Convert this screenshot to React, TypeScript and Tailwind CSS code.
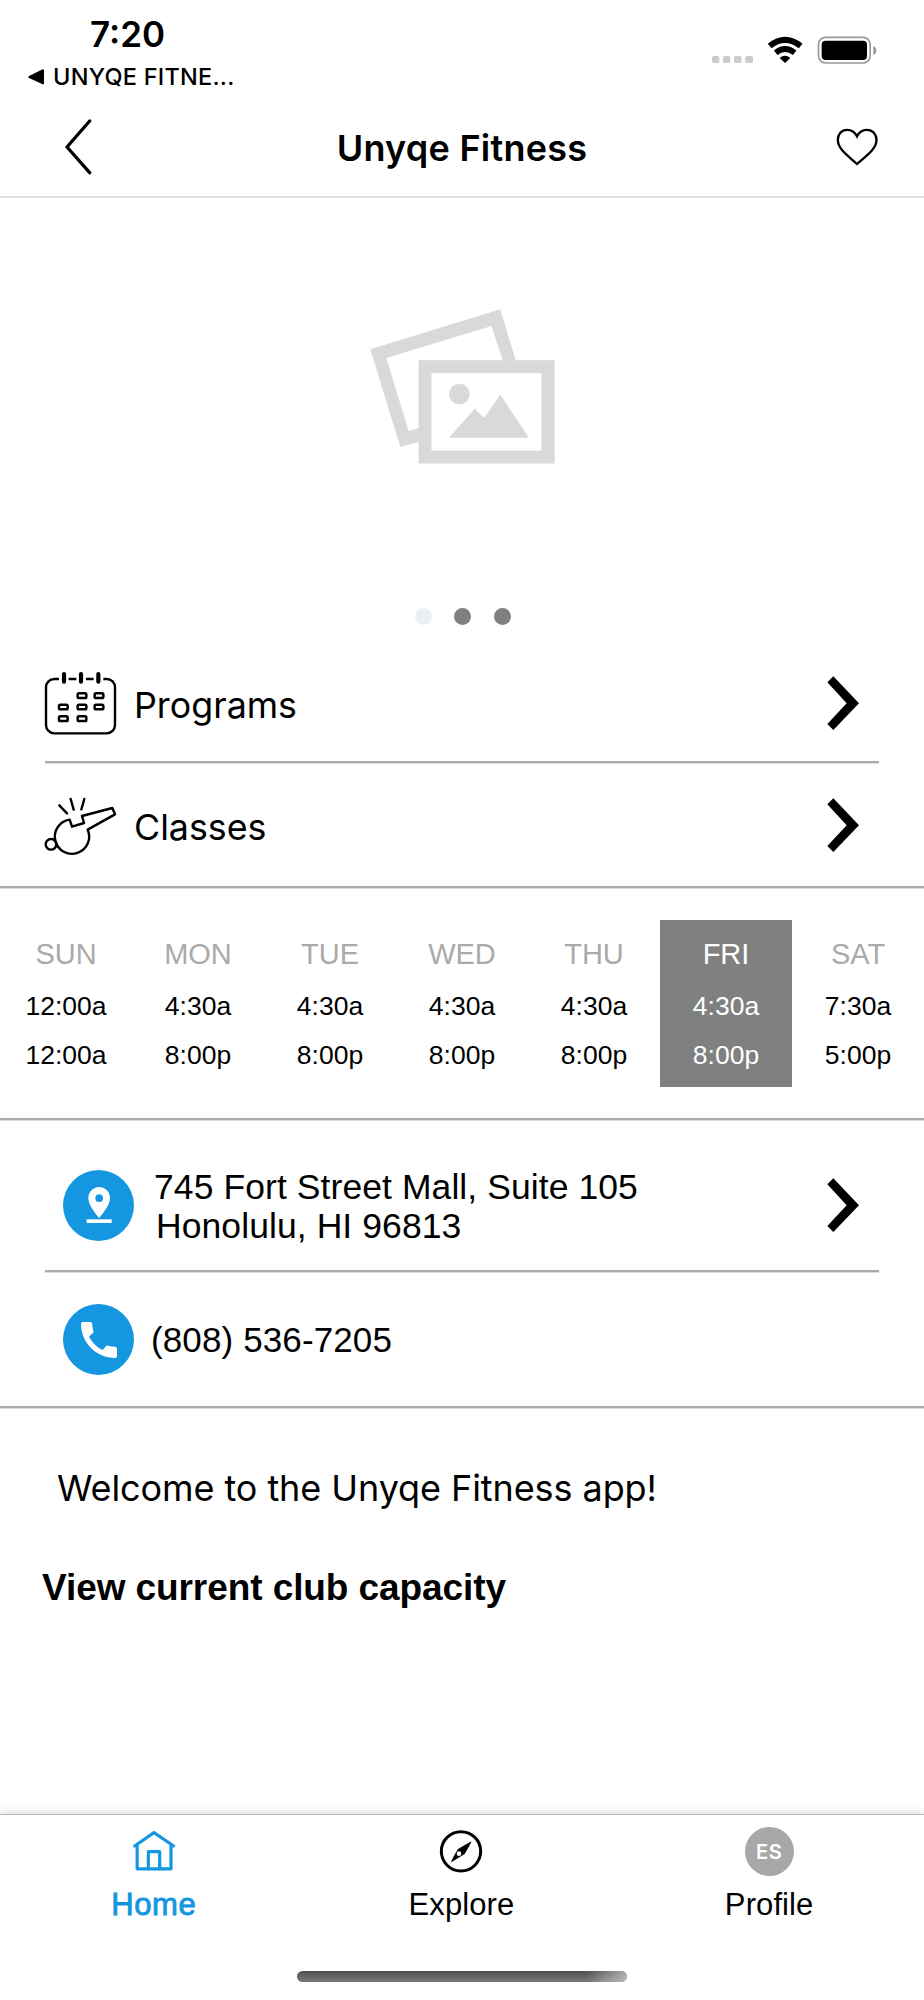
import type { ReactNode } from "react";

const hours = [
  { day: "SUN", open: "12:00a", close: "12:00a" },
  { day: "MON", open: "4:30a", close: "8:00p" },
  { day: "TUE", open: "4:30a", close: "8:00p" },
  { day: "WED", open: "4:30a", close: "8:00p" },
  { day: "THU", open: "4:30a", close: "8:00p" },
  { day: "FRI", open: "4:30a", close: "8:00p" },
  { day: "SAT", open: "7:30a", close: "5:00p" },
];

const today = "FRI";

function ChevronRight() {
  return (
    <svg className="h-[54px] w-[32px]" viewBox="143 78 96 162">
      <path d="M162 79 239 159.500 162 240 144 222 202 159.500 144 97Z" />
    </svg>
  );
}

function CalendarIcon() {
  return (
    <svg className="h-[65px] w-[73px]" viewBox="132 62 219 195" fill="none" stroke="#000">
      <path
        d="M177 86H163a25 25 0 0 0-25 25V224a25 25 0 0 0 25 25H320a25 25 0 0 0 25-25V111a25 25 0 0 0-25-25H310M206 86H229M258 86H281"
        strokeWidth="7.200"
      />
      <path d="M192 71V94M243 71V94M295 71V94" strokeWidth="12.500" strokeLinecap="round" />
      <g strokeWidth="7.500">
        <rect x="233" y="129" width="26" height="14" rx="4" />
        <rect x="284" y="129" width="26" height="14" rx="4" />
        <rect x="177" y="163" width="26" height="14" rx="4" />
        <rect x="233" y="163" width="26" height="14" rx="4" />
        <rect x="284" y="163" width="26" height="14" rx="4" />
        <rect x="177" y="198" width="26" height="14" rx="4" />
        <rect x="233" y="198" width="26" height="14" rx="4" />
      </g>
    </svg>
  );
}

function WhistleIcon() {
  return (
    <svg
      className="mt-[4px] h-[60px] w-[73px]"
      viewBox="132 440 219 180"
      fill="none"
      stroke="#000"
      strokeWidth="7.200"
      strokeLinecap="round"
      strokeLinejoin="round"
    >
      <path d="M209 508 216 529 252 518 246 497 337 473 345 492 263 538A51.500 51.500 0 1 1 209 508Z" />
      <circle cx="153" cy="582" r="16" />
      <path d="M178 465 201 489M212 446 221 478M253 446 244 477" />
    </svg>
  );
}

function StatusBar() {
  return (
    <div className="flex h-[98px] justify-between font-['Inter',sans-serif]">
      <div className="pt-[14px]">
        <div className="pl-[90px] text-[35px] leading-[40px] font-semibold">7:20</div>
        <div className="mt-[7px] flex items-center pl-[28px] leading-[32px]">
          <svg className="mr-[9px] h-[16px] w-[16px]" viewBox="84 206 48 46">
            <path d="M128 206Q132 206 132 210V248Q132 252 128 251L87 232Q82 229 87 226Z" />
          </svg>
          <span className="text-[23.5px] font-medium tracking-[0.25px]">UNYQE FITNE...</span>
        </div>
      </div>
      <svg className="mt-[34px] mr-[46px] h-[32px] w-[168px]" viewBox="744 102 504 96">
        <g fill="#ccc">
          <rect x="750" y="168" width="22" height="21" rx="5" />
          <rect x="783" y="168" width="22" height="21" rx="5" />
          <rect x="816" y="168" width="23" height="21" rx="5" />
          <rect x="850" y="168" width="23" height="21" rx="5" />
        </g>
        <g fill="none" stroke="#000">
          <path d="M923 138Q969 101 1016 138" strokeWidth="18" />
          <path d="M941 158Q969 136 998 158" strokeWidth="17" />
        </g>
        <path d="M953 174Q969 160 985 174L969 189Z" />
        <rect x="1069.500" y="112" width="155" height="77" rx="21" fill="none" stroke="#999" strokeWidth="5" />
        <rect x="1079" y="122" width="136" height="58" rx="12" />
        <path d="M1234 138Q1243 142 1243 151.500 1243 161 1234 165Z" fill="#999" />
      </svg>
    </div>
  );
}

function Header() {
  return (
    <header className="flex h-[100px] items-center justify-between border-b-2 border-[#dedede] pr-[46px] pl-[64px]">
      <svg
        className="h-[56px] w-[42px]"
        viewBox="192 357 126 168"
        fill="none"
        stroke="#000"
        strokeWidth="10"
        strokeLinecap="round"
        strokeLinejoin="round"
      >
        <path d="M269 363 201 441 269 518" />
      </svg>
      <h1 className="mr-[18px] pt-[2px] font-['Inter',sans-serif] text-[36px] leading-[44px] font-semibold tracking-[0.25px]">
        Unyqe Fitness
      </h1>
      <svg className="mb-px h-[38px] w-[42px]" viewBox="1123 383 126 114" fill="none" stroke="#000" strokeWidth="7">
        <path d="M1186 408C1179 394 1167 388.500 1156 388.500 1139 388.500 1128.500 402 1128.500 419 1128.500 447 1161 468 1186 491 1211 468 1244.500 447 1244.500 419 1244.500 402 1233 388.500 1216 388.500 1205 388.500 1193 394 1186 408Z" />
      </svg>
    </header>
  );
}

function Hero() {
  return (
    <div className="flex h-[447px] flex-col items-center">
      <svg className="mt-[111px] h-[155px] w-[185px]" viewBox="89 57 555 465" fill="#d9d9d9">
        <path d="M90 178 480 58 526 211H487L454 108 138 204 205 423 236 414V455L180 471Z" />
        <rect x="254" y="230" width="369" height="271" fill="none" stroke="#d9d9d9" strokeWidth="39" />
        <circle cx="357" cy="312" r="31" />
        <path d="M326 443 403 356 431 384 480 314 566 443Z" />
      </svg>
      <div className="mt-[144px] flex pl-[2px]">
        <span className="mr-[22px] h-[17px] w-[17px] rounded-full bg-[#ebf0f2]" />
        <span className="mr-[23px] h-[17px] w-[17px] rounded-full bg-[#808080]" />
        <span className="h-[17px] w-[17px] rounded-full bg-[#808080]" />
      </div>
    </div>
  );
}

function Divider({ inset = false }: { inset?: boolean }) {
  return <div className={`h-[3px] border-b border-[#dcdcdc] bg-[#ababab] ${inset ? "mx-[45px]" : ""}`} />;
}

function MenuRow({ icon, label, className }: { icon: ReactNode; label: string; className: string }) {
  return (
    <div className={`flex items-center pr-[65px] pl-[44px] ${className}`}>
      {icon}
      <span className="ml-[17px] flex-1 pt-[4px] font-['Inter',sans-serif] text-[35.8px] leading-[44px]">{label}</span>
      <ChevronRight />
    </div>
  );
}

function HoursTable() {
  return (
    <div className="grid h-[229px] grid-cols-7 py-[31px] text-center">
      {hours.map(({ day, open, close }) => (
        <div key={day} className={day === today ? "bg-[#808080] text-white" : ""}>
          <div className={`mt-[18px] text-[29px] leading-[32px] ${day === today ? "" : "text-[#aaa]"}`}>{day}</div>
          <div className="mt-[12px] text-[26.5px] leading-[49px]">
            <div>{open}</div>
            <div>{close}</div>
          </div>
        </div>
      ))}
    </div>
  );
}

function RoundIcon({ children }: { children: ReactNode }) {
  return (
    <span className="flex h-[71px] w-[71px] items-center justify-center rounded-full bg-[#1496e1]">{children}</span>
  );
}

function Contact() {
  return (
    <>
      <div className="flex h-[149px] items-center pt-[19px] pr-[65px] pl-[63px]">
        <RoundIcon>
          <svg className="h-[36px] w-[26px]" viewBox="256 141 78 108" fill="#fff">
            <path
              fillRule="evenodd"
              d="M295.500 141C277 141 263 156 263 174 263 199 295.500 234 295.500 234 295.500 234 328 199 328 174 328 156 314 141 295.500 141ZM295.500 163A11.500 11.500 0 1 1 295.500 186A11.500 11.500 0 1 1 295.500 163Z"
            />
            <rect x="258" y="238" width="75" height="11" />
          </svg>
        </RoundIcon>
        <div className="ml-[20px] flex-1 pt-[4px] text-[35.5px] leading-[39px] tracking-[0.08px]">
          <p>745 Fort Street Mall, Suite 105</p>
          <p className="pl-[2px]">Honolulu, HI 96813</p>
        </div>
        <ChevronRight />
      </div>
      <Divider inset />
      <div className="flex h-[133px] items-center pl-[63px]">
        <RoundIcon>
          <svg className="h-[36px] w-[36px]" viewBox="3 3 18 18" fill="#fff">
            <path d="M20.010 15.380c-1.230 0-2.420-.2-3.530-.560-.350-.120-.740-.030-1.010.240l-1.570 1.970c-2.830-1.350-5.480-3.900-6.890-6.830l1.950-1.660c.270-.280.350-.670.240-1.020-.370-1.110-.560-2.300-.560-3.530 0-.540-.450-.990-.990-.990H4.190C3.650 3 3 3.240 3 3.990 3 13.280 10.730 21 20.010 21c.710 0 .990-.630.990-1.180v-3.450c0-.540-.450-.990-.990-.990z" />
          </svg>
        </RoundIcon>
        <span className="ml-[17px] text-[35px] leading-[40px] tracking-[0.12px]">(808) 536-7205</span>
      </div>
    </>
  );
}

function TabBar() {
  return (
    <nav className="flex h-[186px] flex-col items-center border-t border-[#b5b5b5] bg-white shadow-[0_-2px_8px_rgba(0,0,0,0.14)]">
      <div className="grid w-full grid-cols-3 pt-[12px] pr-px text-[31px] leading-[36px]">
        <div className="flex flex-col items-center text-[#1496e1]">
          <svg
            className="h-[49px] w-[44px]"
            viewBox="158 80 132 147"
            fill="none"
            stroke="currentColor"
            strokeWidth="9.500"
            strokeLinecap="round"
            strokeLinejoin="round"
          >
            <path d="M166 137 224 97 283 137" />
            <path d="M173.500 137V205.500H275V137" />
            <path d="M207 205V154H241V205" />
          </svg>
          <span className="mt-[11px] tracking-[0.6px] [-webkit-text-stroke:0.9px_#1496e1]">Home</span>
        </div>
        <div className="flex flex-col items-center">
          <svg className="h-[49px] w-[44px]" viewBox="1077 80 132 147">
            <circle cx="1143" cy="153" r="59" fill="none" stroke="#000" strokeWidth="9" />
            <path
              fillRule="evenodd"
              d="M1174 123Q1175 126 1154 161L1114 186Q1111 184 1134 146ZM1137 153A7 7 0 1 0 1137 167A7 7 0 1 0 1137 153Z"
            />
          </svg>
          <span className="mt-[11px] tracking-[0.1px]">Explore</span>
        </div>
        <div className="flex flex-col items-center">
          <span className="flex h-[49px] w-[49px] items-center justify-center rounded-full bg-[#a8a8a8] font-['Inter',sans-serif] text-[20px] font-semibold tracking-[0.5px] text-white">
            ES
          </span>
          <span className="mt-[11px] tracking-[0.1px]">Profile</span>
        </div>
      </div>
      <div className="mt-[48px] h-[11px] w-[330px] overflow-hidden rounded-full bg-linear-to-b from-[#505050] to-[#7a7a7a]">
        <div className="ml-auto h-full w-[40px] bg-linear-to-r from-transparent to-white/50" />
      </div>
    </nav>
  );
}

function App() {
  return (
    <div className="flex h-[2000px] w-[924px] flex-col overflow-hidden bg-white font-['Liberation_Sans',Arial,sans-serif] text-black">
      <StatusBar />
      <Header />
      <Hero />
      <MenuRow icon={<CalendarIcon />} label="Programs" className="h-[116px]" />
      <Divider inset />
      <MenuRow icon={<WhistleIcon />} label="Classes" className="h-[122px]" />
      <Divider />
      <HoursTable />
      <Divider />
      <Contact />
      <Divider />
      <main className="flex-1 pt-[57px]">
        <p className="pl-[57px] font-['Inter',sans-serif] text-[36px] leading-[44px] tracking-[-0.08px]">
          Welcome to the Unyqe Fitness app!
        </p>
        <p className="mt-[56px] pl-[42px] text-[37px] leading-[44px] font-bold tracking-[-0.08px]">
          View current club capacity
        </p>
      </main>
      <TabBar />
    </div>
  );
}

export default App;
